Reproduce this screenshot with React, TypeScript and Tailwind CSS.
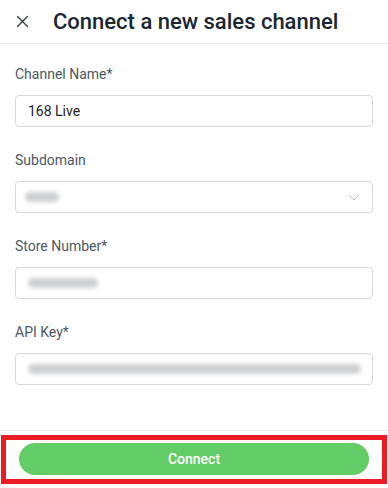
import React from "react";

const Field: React.FC<{ label: string; children: React.ReactNode }> = ({ label, children }) => (
  <div className="flex flex-col">
    <label className="text-[14px] leading-[20px] text-[#4d5863] mb-[11px]">{label}</label>
    {children}
  </div>
);

const Blur: React.FC<{ w: string }> = ({ w }) => (
  <div className={`h-[10px] rounded-full bg-[#cdcfd1] blur-[2px] ${w}`} />
);

const App: React.FC = () => (
  <div className="w-[388px] h-[488px] bg-white flex flex-col" style={{ fontFamily: "Roboto, 'Liberation Sans', sans-serif" }}>
    <div className="h-[44px] flex items-center border-b border-[#ebebeb] pl-[16px]">
      <svg width="13" height="13" viewBox="0 0 13 13" className="text-[#333c45]">
        <path d="M1.5 1.5 L11.5 11.5 M11.5 1.5 L1.5 11.5" stroke="currentColor" strokeWidth="1.3" strokeLinecap="round" />
      </svg>
      <h1 className="ml-[24px] text-[22px] font-medium text-[#1a2732] leading-none">Connect a new sales channel</h1>
    </div>
    <div className="flex-1 flex flex-col gap-[23px] px-[15px] pt-[20px]">
      <Field label="Channel Name*">
        <div className="h-[32px] border border-[#d9d9d9] rounded-[4px] flex items-center px-[12px] text-[14px] text-[#1f2328]">168 Live</div>
      </Field>
      <Field label="Subdomain">
        <div className="h-[32px] border border-[#d9d9d9] rounded-[4px] flex items-center justify-between pl-[9px] pr-[12px]">
          <Blur w="w-[34px]" />
          <svg width="12" height="7" viewBox="0 0 12 7">
            <path d="M1 1 L6 6 L11 1" fill="none" stroke="#c3c3c3" strokeWidth="1" />
          </svg>
        </div>
      </Field>
      <Field label="Store Number*">
        <div className="h-[32px] border border-[#d9d9d9] rounded-[4px] flex items-center pl-[12px]">
          <Blur w="w-[70px]" />
        </div>
      </Field>
      <Field label="API Key*">
        <div className="h-[32px] border border-[#d9d9d9] rounded-[4px] flex items-center pl-[12px] pr-[11px]">
          <Blur w="w-full" />
        </div>
      </Field>
    </div>
    <div className="border-t border-[#ebebeb] pt-[4px] pb-[4px] px-[1px]">
      <div className="border-[5px] border-[#ec1c24] px-[13px] py-[3px] pb-[4px]">
        <button className="w-full h-[32px] rounded-full bg-[#62cc66] text-white text-[14px] font-medium">Connect</button>
      </div>
    </div>
  </div>
);

export default App;
